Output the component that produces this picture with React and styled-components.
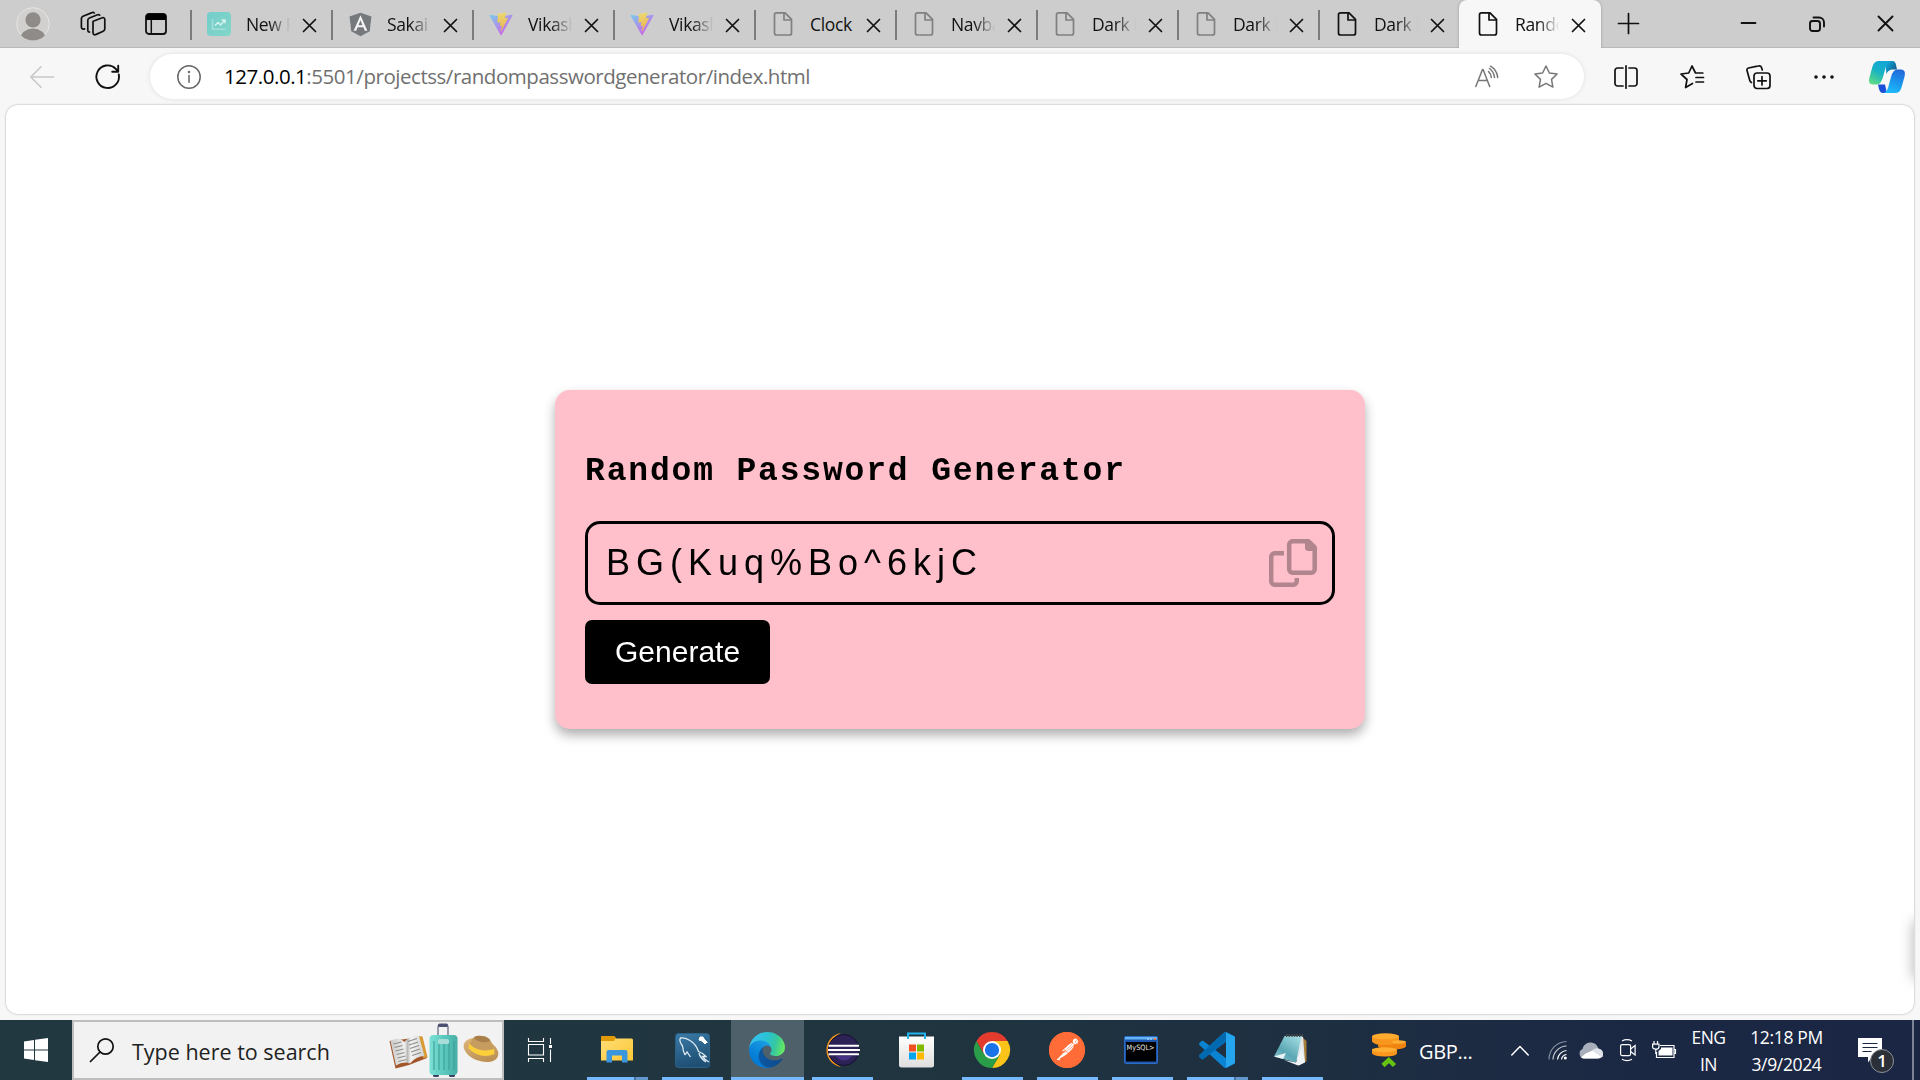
import React from "react";
import styled, { createGlobalStyle, css } from "styled-components";
import { FaAngular } from "react-icons/fa";
import { SiPostman } from "react-icons/si";

const GlobalStyle = createGlobalStyle`
  * { box-sizing: border-box; }
  html, body { margin: 0; padding: 0; }
  body {
    width: 1920px;
    height: 1080px;
    overflow: hidden;
    font-family: "Open Sans", "Noto Sans", sans-serif;
  }
  svg { display: block; flex: none; overflow: visible; }
`;

const Screen = styled.div`
  display: flex;
  flex-direction: column;
  width: 1920px;
  height: 1080px;
  background: #f7f7f7;
`;

/* ---------- tab strip ---------- */

const TabStrip = styled.div`
  display: flex;
  height: 48px;
  background: #cdcdcd;
  box-shadow: inset 0 -1px 0 #b9b9b9;
`;

const IconCell = styled.div`
  display: flex;
  flex: none;
  align-items: center;
  justify-content: center;
  width: ${(p) => p.$w}px;
  height: 100%;
  padding-left: ${(p) => p.$left || 0}px;
  padding-right: ${(p) => p.$right || 0}px;
  padding-bottom: ${(p) => p.$bottom || 0}px;
`;

const TabItem = styled.div`
  display: flex;
  flex: none;
  align-items: center;
  width: 141px;
  height: 48px;
  padding-left: 17px;
  background: linear-gradient(#7b7b7b, #7b7b7b) 0 10px / 2px 30px no-repeat;

  ${(p) =>
    p.$active &&
    css`
      width: 142px;
      height: 48px;
      padding-left: 17px;
      background: #f7f7f7;
      border-radius: 8px 8px 0 0;
      box-shadow: 0 0 3px rgba(0, 0, 0, 0.25);
      clip-path: inset(0 -4px 0 -4px);
    `}
`;

const Favicon = styled.div`
  display: flex;
  flex: none;
  width: 24px;
  height: 24px;
  align-items: center;
  justify-content: center;
  opacity: ${(p) => (p.$dim ? 0.6 : 1)};
`;

const AngularBadge = styled.div`
  display: flex;
  color: #75787c;
  background: radial-gradient(#f4f4f4 50%, transparent 54%);
`;

const TabTitle = styled.div`
  flex: none;
  width: 46px;
  margin-left: 15px;
  padding-bottom: 1px;
  overflow: hidden;
  white-space: nowrap;
  font-size: 17.5px;
  line-height: 24px;
  letter-spacing: -0.35px;
  color: #111;
  ${(p) =>
    p.$fade &&
    css`
      mask-image: linear-gradient(90deg, #000 50%, transparent 96%);
    `}
`;

const TabClose = styled.div`
  display: flex;
  margin-left: 11px;
  padding-top: 2px;
`;

const StripSpacer = styled.div`
  flex: 1;
`;

/* ---------- toolbar ---------- */

const Toolbar = styled.div`
  display: flex;
  align-items: center;
  height: 57px;
  flex: none;
  background: #f7f7f7;
`;

const AddressBar = styled.div`
  display: flex;
  align-items: center;
  flex: none;
  width: 1434px;
  height: 45px;
  margin-left: 9px;
  padding-left: 27px;
  padding-right: 8px;
  background: #fff;
  border-radius: 23px;
  box-shadow: 0 0 5px rgba(0, 0, 0, 0.1);
`;

const Url = styled.div`
  flex: 1;
  margin-left: 23px;
  padding-bottom: 2px;
  font-size: 20.5px;
  line-height: 30px;
  letter-spacing: -0.46px;
  white-space: nowrap;
  color: #707070;
`;

const UrlHost = styled.span`
  color: #000;
`;

/* ---------- page ---------- */

const Viewport = styled.main`
  position: relative;
  display: flex;
  justify-content: center;
  align-items: flex-start;
  flex: none;
  width: 1908px;
  height: 909px;
  margin: 0 6px 6px;
  padding-top: 285px;
  overflow: hidden;
  background: #fff;
  border-radius: 12px;
`;

const Frame = styled.div`
  border-radius: 12px;
  height: 915px;
  flex: none;
  filter: drop-shadow(0 0 1px rgba(0, 0, 0, 0.3));
`;

const SidebarHint = styled.div`
  position: absolute;
  left: 1908px;
  top: 817px;
  width: 12px;
  height: 56px;
  box-shadow: 0 0 14px 1px rgba(0, 0, 0, 0.28);
`;

const Card = styled.section`
  width: 810px;
  height: 339px;
  padding: 57px 30px 0;
  background: #ffc0cb;
  border-radius: 15px;
  box-shadow: 0 6px 12px rgba(0, 0, 0, 0.32);
`;

const Heading = styled.h2`
  margin: 0 0 25px;
  height: 49px;
  font: bold 33px/49px "Courier New", "Liberation Mono", monospace;
  letter-spacing: 1.83px;
  white-space: nowrap;
  color: #000;
`;

const PasswordBox = styled.div`
  display: flex;
  align-items: center;
  justify-content: space-between;
  height: 84px;
  padding: 0 15px 0 18px;
  border: 3px solid #000;
  border-radius: 15px;
`;

const Password = styled.span`
  font: 36px/42px "Liberation Sans", Arial, sans-serif;
  letter-spacing: 6px;
  color: #000;
`;

const CopyIcon = styled.svg`
  width: 48px;
  height: 48px;
  opacity: 0.3;
`;

const GenerateButton = styled.button`
  display: block;
  height: 64px;
  margin: 15px 0 0;
  padding: 0 30px;
  border: 0;
  border-radius: 7px;
  background: #000;
  color: #fff;
  font: 30px/34px "Liberation Sans", Arial, sans-serif;
`;

/* ---------- taskbar ---------- */

const Taskbar = styled.footer`
  display: flex;
  flex: none;
  height: 60px;
  background: linear-gradient(90deg, #213841 0%, #20353f 45%, #1e2f41 68%, #1b2844 85%, #1a2643 100%);
  color: #fff;
`;

const SearchBox = styled.div`
  display: flex;
  align-items: center;
  flex: none;
  width: 432px;
  height: 60px;
  padding-left: 16px;
  border: 2px solid #bebebe;
  background: #f2f2f2;
`;

const SearchText = styled.div`
  flex: none;
  width: 257px;
  margin-left: 18px;
  padding-top: 4px;
  font-size: 21.5px;
  line-height: 30px;
  letter-spacing: 0;
  white-space: nowrap;
  color: #222;
`;

const SearchArtBox = styled.div`
  display: flex;
  flex: none;
  padding-top: 2px;
`;

const AppButton = styled.div`
  display: flex;
  flex: none;
  flex-direction: column;
  align-items: center;
  width: 75px;
  height: 60px;
`;

const AppFace = styled.div`
  display: flex;
  align-items: center;
  justify-content: center;
  width: 73px;
  height: 57px;
  padding-top: 3px;
  padding-right: ${(p) => p.$nudge || 1}px;
  background: ${(p) => (p.$current ? "#4e616a" : "transparent")};
`;

const RunningBar = styled.div`
  width: ${(p) => (p.$current ? 73 : 61)}px;
  height: 3px;
  background: ${(p) =>
    p.$stacked
      ? "linear-gradient(90deg, #76b9ff 47px, #46729b 47px, #46729b 49px, #6398cc 49px)"
      : "#76b9ff"};
`;

const PostmanDisc = styled.div`
  display: flex;
  border-radius: 50%;
  background: radial-gradient(#fff 60%, #ff6c37 64%);
  color: #ff6c37;
`;

const News = styled.div`
  display: flex;
  align-items: center;
  flex: none;
  width: 181px;
  padding-left: 42px;
`;

const NewsText = styled.div`
  margin-left: 13px;
  padding-top: 4px;
  font-size: 20px;
  line-height: 28px;
  letter-spacing: -0.3px;
`;

const Tray = styled.div`
  display: flex;
  align-items: center;
  flex: none;
  width: 169px;
`;

const TrayIcon = styled.div`
  display: flex;
  flex: none;
  margin-left: ${(p) => p.$gap}px;
`;

const Stack = styled.div`
  display: flex;
  flex-direction: column;
  flex: none;
  width: ${(p) => p.$w}px;
  height: 60px;
  padding-top: 4px;
  text-align: center;
  font-size: 17.5px;
  line-height: 27px;
  letter-spacing: ${(p) => p.$track}px;
  white-space: nowrap;
`;

const Notice = styled.div`
  position: relative;
  display: flex;
  width: 36px;
  margin-left: 22px;
  padding-top: 18px;
`;

const NoticeCount = styled.div`
  position: absolute;
  left: 12px;
  top: 29px;
  width: 24px;
  height: 24px;
  border: 1px solid #8d9096;
  border-radius: 50%;
  background: #2b2f38;
  text-align: center;
  font-size: 17px;
  font-weight: 600;
  line-height: 22px;
`;

const ShowDesktop = styled.div`
  width: 8px;
  height: 60px;
  margin-left: auto;
  border-left: 2px solid #7b8394;
`;

/* ---------- drawings ---------- */

const Line = ({ w = 24, h = 24, vb, sw = 1.6, color = "#111", children }) => (
  <svg
    width={w}
    height={h}
    viewBox={vb || `0 0 ${w} ${h}`}
    fill="none"
    stroke={color}
    strokeWidth={sw}
    strokeLinecap="round"
    strokeLinejoin="round"
  >
    {children}
  </svg>
);

const DocIcon = ({ color }) => (
  <Line color={color} sw={1.7}>
    <path d="M6 .8h8l6.500 6.500V21a2 2 0 0 1-2 2H5.500a2 2 0 0 1-2-2V2.800a2 2 0 0 1 2-2z" />
    <path d="M13 1V8H20" />
  </Line>
);

const Cross = ({ size = 12, sw = 1.7 }) => (
  <Line w={size} h={size} sw={sw}>
    <path d={`M0.5 0.5 L${size - 0.5} ${size - 0.5} M${size - 0.5} 0.5 L0.5 ${size - 0.5}`} />
  </Line>
);

const ChartIcon = () => (
  <svg width="24" height="24" viewBox="0 0 24 24">
    <defs>
      <linearGradient id="chart" x1="0" x2="1" y2="1">
        <stop offset="0" stopColor="#74cdcb" />
        <stop offset="1" stopColor="#82d6c9" />
      </linearGradient>
    </defs>
    <rect width="24" height="24" rx="4" fill="url(#chart)" />
    <path d="M5.500 7v10.200h13" fill="none" stroke="#a4dfd9" strokeWidth="1.500" />
    <path d="M8 13.500l3-3 2.500 2.500 4-4.500M14.500 8h3.500v3.300" fill="none" stroke="#d6f2ee" strokeWidth="1.500" />
  </svg>
);

const ViteIcon = () => (
  <svg width="24" height="24" viewBox="0 0 410 404">
    <defs>
      <linearGradient id="va" x1="6" y1="33" x2="235" y2="344" gradientUnits="userSpaceOnUse">
        <stop stopColor="#41d1ff" />
        <stop offset="1" stopColor="#bd34fe" />
      </linearGradient>
      <linearGradient id="vb" x1="194" y1="9" x2="236" y2="292" gradientUnits="userSpaceOnUse">
        <stop stopColor="#ffea83" />
        <stop offset="0.08" stopColor="#ffdd35" />
        <stop offset="1" stopColor="#ffa800" />
      </linearGradient>
    </defs>
    <path
      fill="url(#va)"
      d="M399.641 59.5246L215.643 388.545C211.844 395.338 202.084 395.378 198.228 388.618L10.5817 59.5563C6.38087 52.1896 12.6802 43.2665 21.0281 44.7586L205.223 77.6824C206.398 77.8924 207.601 77.8904 208.776 77.6763L389.119 44.8058C397.439 43.2894 403.768 52.1434 399.641 59.5246Z"
    />
    <path
      fill="url(#vb)"
      d="M292.965 1.5744L156.801 28.2552C154.563 28.6937 152.906 30.5903 152.771 32.8664L144.395 174.33C144.198 177.662 147.258 180.248 150.51 179.498L188.42 170.749C191.967 169.931 195.172 173.055 194.443 176.622L183.18 231.775C182.422 235.487 185.907 238.661 189.532 237.56L212.947 230.446C216.577 229.344 220.065 232.527 219.297 236.242L201.398 322.875C200.278 328.294 207.486 331.249 210.492 326.603L212.5 323.5L323.454 102.072C325.312 98.3645 322.108 94.137 318.036 94.9228L279.014 102.454C275.347 103.161 272.227 99.746 273.262 96.1583L298.731 7.86689C299.767 4.27314 296.636 0.855181 292.965 1.5744Z"
    />
  </svg>
);

const ProfileIcon = () => (
  <svg width="34" height="34" viewBox="0 0 34 34">
    <defs>
      <clipPath id="face">
        <circle cx="17" cy="17" r="16.5" />
      </clipPath>
    </defs>
    <circle cx="17" cy="17" r="16.3" fill="#d2d0ce" stroke="#e6e5e3" />
    <circle cx="17" cy="12.8" r="7.6" fill="#8e8b88" />
    <ellipse cx="17" cy="31.5" rx="12.5" ry="10" fill="#8e8b88" clipPath="url(#face)" />
  </svg>
);

const WorkspacesIcon = () => (
  <Line w={26} h={26} sw={1.7}>
    <path d="M13.2 10.2l9-3.4a1.8 1.8 0 0 1 2.6 1.7v9.3a2.6 2.6 0 0 1-1.6 2.4l-7.6 3.4a1.8 1.8 0 0 1-2.6-1.7V11.4a1.6 1.6 0 0 1 .2-1.2z" />
    <path d="M9.5 21.2a2 2 0 0 1-1.7-2V9.3A2.6 2.6 0 0 1 9.4 7l8.2-3.2a2 2 0 0 1 2.1.3" />
    <path d="M4.6 17.8A2 2 0 0 1 1.4 16.3V7.6A2.6 2.6 0 0 1 3 5.2L12 1.6a2 2 0 0 1 2.3.4" />
  </Line>
);

const VerticalTabsIcon = () => (
  <svg width="22" height="22" viewBox="0 0 22 22">
    <rect x="1" y="1" width="20" height="20" rx="3" fill="none" stroke="#111" strokeWidth="1.8" />
    <path d="M1 7V3.5A2.5 2.5 0 0 1 3.5 1h15A2.5 2.5 0 0 1 21 3.5V7z" fill="#000" />
    <path d="M6.3 7v14" stroke="#111" strokeWidth="1.5" />
  </svg>
);

const CopilotIcon = () => (
  <svg width="36" height="32" viewBox="0 0 36 32">
    <defs>
      <linearGradient id="cp1" x1="0.7" y1="0" x2="0.2" y2="1">
        <stop offset="0" stopColor="#12a5d8" />
        <stop offset="0.45" stopColor="#16b2c4" />
        <stop offset="1" stopColor="#5fdc84" />
      </linearGradient>
      <linearGradient id="cp2" x1="0.7" y1="0" x2="0.4" y2="1">
        <stop offset="0" stopColor="#2368d8" />
        <stop offset="0.6" stopColor="#1a9cf0" />
        <stop offset="1" stopColor="#20b9f8" />
      </linearGradient>
      <linearGradient id="cp3" x1="0" x2="1" y2="0.6">
        <stop offset="0" stopColor="#0fb9e8" />
        <stop offset="1" stopColor="#125a8c" />
      </linearGradient>
    </defs>
    <path d="M16 0H23.5Q26 0 26.800 3L28 8.500H24Q19 8.500 17.500 13z" fill="url(#cp3)" />
    <path d="M9 23.500H16L17 28Q17 31.500 20 32H14Q11 32 10 28z" fill="#1c4fd8" />
    <path d="M10 0H21Q18 1.500 17 5L14 16Q12 23.500 8 23.500H3.500Q-1 23.500 .3 17L3.500 5.500Q5 0 10 0z" fill="url(#cp1)" />
    <path d="M26 32H15Q18 30.500 19 27L22 16Q24 8.500 28 8.500H32Q37 8.500 35.700 15L32.500 26.500Q31 32 26 32z" fill="url(#cp2)" />
  </svg>
);

const WindowsLogo = () => (
  <svg width="24" height="24" viewBox="0 0 24 24" fill="#fff">
    <path d="M0 3.4L10 2v9.5H0zM11 1.8L24 0v11.5H11zM0 12.5h10V22L0 20.6zM11 12.5h13V24L11 22.2z" />
  </svg>
);

const SearchArt = () => (
  <svg width="110" height="56" viewBox="0 0 110 56">
    <defs>
      <linearGradient id="case" x1="0" x2="1">
        <stop offset="0" stopColor="#7ce0d6" />
        <stop offset="0.5" stopColor="#5ccabf" />
        <stop offset="1" stopColor="#47aea6" />
      </linearGradient>
      <linearGradient id="hat" x1="0" x2="1" y2="1">
        <stop offset="0" stopColor="#e3bd86" />
        <stop offset="1" stopColor="#b38648" />
      </linearGradient>
      <linearGradient id="page" x1="0" x2="1">
        <stop offset="0" stopColor="#c9c9c7" />
        <stop offset="0.42" stopColor="#efefee" />
        <stop offset="0.5" stopColor="#b9b9b7" />
        <stop offset="0.6" stopColor="#f4f4f3" />
        <stop offset="1" stopColor="#cfcfcc" />
      </linearGradient>
    </defs>
    <path d="M.5 18L6.500 45.500 20 42 38 35 33 14z" fill="#a3552b" />
    <path d="M29 13l4.500 .5L38.500 34l-4 1.500z" fill="#d99a34" />
    <path d="M1.500 18Q10 13 15.500 19Q22 11 30 13L35.500 33Q27 33 21 40.500Q14 38 7 42.500z" fill="url(#page)" />
    <path d="M4.500 21l8-2M5.500 24.500l8-2M6.500 28l8-2M7.500 31.500l8-2M8.500 35l8-2M9.500 38.500l8-2M19 18.500l9-3M20 22l9-3M21 25.500l9-3M22 29l9-3M23 32.500l9-3" stroke="#8d8d8d" strokeWidth="1.100" />
    <path d="M49 15V4.500Q49 2 51.500 2h5Q59 2 59 4.500V15" fill="none" stroke="#9a9cab" strokeWidth="2" />
    <rect x="49" y="0.500" width="10" height="3.400" rx="1.500" fill="#4e5072" />
    <rect x="44" y="50" width="6" height="4" rx="1.500" fill="#3c4464" />
    <rect x="60" y="50" width="6" height="4" rx="1.500" fill="#3c4464" />
    <rect x="40.500" y="12" width="28" height="40" rx="4" fill="url(#case)" />
    <path d="M45 18v29M50 20v27M55 20v27M60 20v27M65 18v29" stroke="#3e9f97" strokeWidth="1.100" />
    <rect x="49" y="16" width="11" height="5" rx="1.500" fill="#a7dcd8" />
    <ellipse cx="92" cy="27" rx="18" ry="11" transform="rotate(20 92 27)" fill="url(#hat)" />
    <path d="M80 25Q82 11 92 13Q104 13 105 30Q94 37 80 25z" fill="#c79c60" />
    <path d="M80 20.500Q90 30.500 105 26L105.500 31Q92 37 79.500 25.500z" fill="#fbcf3a" />
    <ellipse cx="93" cy="16" rx="8" ry="3" fill="#a97f4a" transform="rotate(10 93 16)" />
  </svg>
);

const TaskViewIcon = () => (
  <svg width="24" height="24" viewBox="0 0 24 24" fill="none" stroke="#fff" strokeWidth="1.1">
    <path d="M.5 0v3.500h15V0M.5 24v-3.500h15V24M.5 6.500h15v10.500h-15zM22.500 0v6M22.500 11.500V24" />
    <rect x="21" y="7" width="3" height="3" fill="#fff" stroke="none" />
  </svg>
);

const FolderIcon = () => (
  <svg width="32" height="28" viewBox="0 0 32 28">
    <defs>
      <linearGradient id="fold" x1="0" x2="1" y2="1">
        <stop offset="0" stopColor="#ffdf7c" />
        <stop offset="1" stopColor="#fcc733" />
      </linearGradient>
    </defs>
    <path d="M0 1.500Q0 0 1.500 0H13l2 2.500H30.500Q32 2.500 32 4V24.500H0z" fill="url(#fold)" />
    <path d="M0 5V1.500Q0 0 1.500 0H13l2 2-2 3z" fill="#e09b07" />
    <path d="M5.500 26.500V16Q5.500 14 7.500 14h17Q26.500 14 26.500 16V26.500H21V19.500H11V26.500z" fill="#3a96dd" />
  </svg>
);

const WorkbenchIcon = () => (
  <svg width="35" height="35" viewBox="0 0 35 35">
    <defs>
      <linearGradient id="wb" y2="1" x2="0.3">
        <stop offset="0" stopColor="#3b7ba8" />
        <stop offset="1" stopColor="#1f4f73" />
      </linearGradient>
    </defs>
    <rect x=".5" y=".5" width="34" height="34" rx="3" fill="url(#wb)" stroke="#2c628a" />
    <path
      d="M10 22Q8 18 7.500 13Q3.500 7.500 5.500 5Q10 4 15 7.500Q21 11 23.500 18.500Q28 20 31 23.500L27.500 23.500Q30 27 34 29M10 22l2-3 3.500 5M24 20Q25 25 31 29"
      fill="none"
      stroke="#dbe9f2"
      strokeWidth="1.3"
    />
    <path d="M25 4l3 0 1 2 3 3-2 2-3-3-3-1zM31 8l1.500 2" fill="#fff" stroke="#fff" />
  </svg>
);

const EdgeIcon = () => (
  <svg width="36" height="36" viewBox="0 0 256 256">
    <defs>
      <linearGradient id="e1" x1="60" y1="177" x2="240" y2="177" gradientUnits="userSpaceOnUse">
        <stop stopColor="#0c59a4" />
        <stop offset="1" stopColor="#114a8b" />
      </linearGradient>
      <linearGradient id="e2" x1="150" y1="90" x2="40" y2="230" gradientUnits="userSpaceOnUse">
        <stop stopColor="#1b9de2" />
        <stop offset="0.2" stopColor="#1595df" />
        <stop offset="0.7" stopColor="#0680d7" />
        <stop offset="1" stopColor="#0078d4" />
      </linearGradient>
      <linearGradient id="e3" x1="10" y1="60" x2="250" y2="120" gradientUnits="userSpaceOnUse">
        <stop stopColor="#35c1f1" />
        <stop offset="0.45" stopColor="#2bc3d2" />
        <stop offset="0.72" stopColor="#36c7a0" />
        <stop offset="1" stopColor="#66eb5e" />
      </linearGradient>
    </defs>
    <path
      fill="url(#e1)"
      d="M231 190.500c-3.400 1.800-6.900 3.400-10.500 4.700a101.500 101.500 0 0 1-35.900 6.400c-47.300 0-88.500-32.500-88.500-74.300a31.500 31.500 0 0 1 16.400-27.300c-42.800 1.800-53.800 46.400-53.800 72.500 0 74 68.100 81.400 82.800 81.400 7.900 0 19.800-2.300 27-4.600l1.300-.4a128.300 128.300 0 0 0 66.600-52.800 4 4 0 0 0-5.400-5.600Z"
    />
    <path
      fill="url(#e2)"
      d="M105.700 241.400a79.200 79.200 0 0 1-22.700-21.300 80.700 80.700 0 0 1 29.500-120c3.200-1.500 8.500-4.100 15.600-4a32.400 32.400 0 0 1 25.700 13 31.900 31.900 0 0 1 6.300 18.700c0-.2 24.500-79.600-80-79.600-43.900 0-80 41.700-80 78.200a130.200 130.200 0 0 0 12.100 56 128 128 0 0 0 156.400 67 75.500 75.500 0 0 1-62.800-8Z"
    />
    <path
      fill="url(#e3)"
      d="M152.300 148.900c-.9 1-3.400 2.500-3.400 5.600 0 2.600 1.700 5.200 4.800 7.300 14.300 10 41.400 8.600 41.500 8.600a59.600 59.600 0 0 0 30.300-8.300 61.400 61.400 0 0 0 30.400-52.900c.3-22.400-8-37.300-11.300-43.900C223.500 23.900 177.700 0 128 0A128 128 0 0 0 0 126.200c.5-36.500 36.800-66 80-66 3.500 0 23.500.3 42 10a72.600 72.600 0 0 1 30.900 29.300c6.100 10.600 7.200 24.100 7.200 29.500 0 5.400-2.700 13.300-7.800 19.900Z"
    />
  </svg>
);

const EclipseIcon = () => (
  <svg width="36" height="34" viewBox="0 0 36 34">
    <path d="M17 0A17.200 17.200 0 0 0 17 34Q5 28 5 17T17 0z" fill="#f7941e" />
    <circle cx="19.700" cy="17" r="15.500" fill="#2c2255" stroke="#15102e" strokeWidth="1" />
    <path d="M12 23h16Q25 27.500 20 27.500T12 23z" fill="#453285" />
    <path d="M4.500 12.700h30.500M4 17h32M4.500 21.300h30.500" stroke="#fff" strokeWidth="2" />
  </svg>
);

const StoreIcon = () => (
  <svg width="35" height="36" viewBox="0 0 35 36">
    <defs>
      <linearGradient id="bag" y2="1" x2="0">
        <stop offset="0" stopColor="#fff" />
        <stop offset="1" stopColor="#dedede" />
      </linearGradient>
    </defs>
    <path d="M0 4.500h35V33q0 2.500-2.500 2.500h-30Q0 35.500 0 33z" fill="url(#bag)" />
    <path d="M9 7V1.500h17V7" fill="none" stroke="#23b4f0" strokeWidth="2" />
    <path d="M10 12.500h7v7h-7z" fill="#f25022" />
    <path d="M18 12.500h7v7h-7z" fill="#7fba00" />
    <path d="M10 20.500h7v7h-7z" fill="#00a4ef" />
    <path d="M18 20.500h7v7h-7z" fill="#ffb900" />
  </svg>
);

const ChromeIcon = () => (
  <svg width="36" height="36" viewBox="0 0 48 48">
    <path d="M3.215 12A24 24 0 0 1 44.785 12H24L13.600 30z" fill="#e33b2e" />
    <path d="M44.785 12A24 24 0 0 1 24 48L34.400 30 24 12z" fill="#fcc419" />
    <path d="M24 48A24 24 0 0 1 3.215 12L13.600 30H34.400z" fill="#2a9d48" />
    <circle cx="24" cy="24" r="12" fill="#fff" />
    <circle cx="24" cy="24" r="9.500" fill="#1a73e8" />
  </svg>
);

const ConsoleIcon = () => (
  <svg width="34" height="28" viewBox="0 0 34 28">
    <rect x=".5" y=".5" width="33" height="27" rx="1" fill="#1d55ad" stroke="#2c6cc4" />
    <rect x="1" y="1" width="32" height="2.500" fill="#62b4f5" />
    <path d="M23 3h2M26 3h2" stroke="#9fd0f8" strokeWidth="1.500" />
    <path d="M30 3h2" stroke="#f07a45" strokeWidth="1.800" />
    <rect x="2" y="6" width="30" height="19.500" fill="#000" />
    <text x="2.600" y="14" fill="#e8e8e8" fontSize="7.300" textLength="28" lengthAdjust="spacingAndGlyphs" fontFamily="DejaVu Sans, sans-serif">
      MySQL&gt;
    </text>
  </svg>
);

const CodeIcon = () => (
  <svg width="36" height="36" viewBox="0 0 24 24">
    <path
      fill="#0a84d2"
      d="M23.150 2.587L18.210.21a1.494 1.494 0 0 0-1.705.29l-9.460 8.630-4.120-3.128a.999.999 0 0 0-1.276.057L.327 7.261A1 1 0 0 0 .326 8.740L3.899 12 .326 15.260a1 1 0 0 0 .001 1.479L1.650 17.940a.999.999 0 0 0 1.276.057l4.120-3.128 9.460 8.630a1.492 1.492 0 0 0 1.704.29l4.942-2.377A1.500 1.500 0 0 0 24 20.060V3.939a1.500 1.500 0 0 0-.85-1.352zm-5.146 14.861L10.826 12l7.178-5.448v10.896z"
    />
    <path d="M.327 15.260L7.045 9.130l3.781 2.870L2.926 17.997a1 1 0 0 1-1.276-.057L.327 16.739a1 1 0 0 1 0-1.479z" fill="#0069b0" />
    <path d="M16.505.5L7.045 9.130 10.826 12l7.178-5.448V.15z" fill="#0069b0" />
    <path d="M18.004.15L23.150 2.587A1.500 1.500 0 0 1 24 3.939V20.060a1.500 1.500 0 0 1-.85 1.352L18.210 23.790h-.2z" fill="#25a5ee" />
  </svg>
);

const NotepadIcon = () => (
  <svg width="34" height="32" viewBox="0 0 34 32">
    <defs>
      <linearGradient id="np" x1="0.8" x2="0.1" y2="1">
        <stop offset="0" stopColor="#9fdbe0" />
        <stop offset="0.6" stopColor="#5aa6b4" />
        <stop offset="1" stopColor="#8fc6cc" />
      </linearGradient>
    </defs>
    <path d="M29 4l3.500 3V28l-4-2z" fill="#a97f3a" />
    <path d="M11 2h18l2 26-6 3.500z" fill="#dfe7e8" />
    <path d="M10.500 2H27.500L22 28.500 0 22.500z" fill="url(#np)" />
    <path d="M0 22.500L12 19 9 25z" fill="#e8f4f5" />
    <path d="M10 26L24 31.500 31 28.500 28 14 22 28.500z" fill="#f0f4f4" />
    <path d="M12 1.500h17" stroke="#4a4a4a" strokeWidth="3" strokeDasharray="1.300 1.300" />
  </svg>
);

const CoinsIcon = () => (
  <svg width="34" height="35" viewBox="0 0 34 35">
    <g fill="#f8961d">
      <path d="M0 16.500v4q2 3 13 3t12-3v-4z" />
      <path d="M6 9.500v4q2 3 14 3t14-3v-4z" fill="#f0830f" />
      <path d="M0 3.500v5q2 3.500 13 3.500t14-3.500v-5z" />
    </g>
    <ellipse cx="12.500" cy="16.800" rx="12.500" ry="2.500" fill="#ffad33" />
    <ellipse cx="27" cy="9" rx="7" ry="1.800" fill="#ffad33" />
    <ellipse cx="13.500" cy="3.300" rx="13.500" ry="3" fill="#ffab2e" />
    <path d="M11 32.500L16.800 27l5.700 5.500" fill="none" stroke="#66c411" strokeWidth="4.500" />
  </svg>
);

const WifiIcon = () => (
  <svg width="19" height="20" viewBox="0 0 19 20" fill="none" strokeWidth="1.200">
    <path d="M1 19.500A18 18 0 0 1 18.500 1.500" stroke="#8790a0" />
    <path d="M5 19.500A14 14 0 0 1 18.500 6" stroke="#c8ccd3" />
    <path d="M9.500 19.500A10 10 0 0 1 18.500 10.500" stroke="#fff" />
    <path d="M13.500 19.500A6 6 0 0 1 18.500 14.500" stroke="#fff" />
    <circle cx="17.300" cy="18" r="1.500" fill="#fff" />
  </svg>
);

const CloudIcon = () => (
  <svg width="24" height="17" viewBox="0 0 24 17">
    <path d="M5 16.500A5 5 0 0 1 3.500 7Q5 1 11 .5T19.500 6.500Q24 7.500 24 12T19 16.500z" fill="#a9afba" />
    <path d="M2 15.500Q6 11 13.500 8.500L22.500 14.500Q21 16.500 19 16.500H5Q3 16.500 2 15.500z" fill="#fff" />
    <path d="M13 8.500Q17 5 20.500 7Q24 8 24 12T22.800 15z" fill="#dfe2e7" />
  </svg>
);

const MeetIcon = () => (
  <svg width="16" height="22" viewBox="0 0 16 22" fill="none" stroke="#fff" strokeWidth="1.200">
    <rect x=".6" y="5.600" width="10" height="11" rx="1.500" />
    <path d="M10.600 10l4.500-3.500v9.500l-4.500-3.500M2 2Q7 -.8 12 2M2 20.200Q7 23 12 20.200" />
  </svg>
);

const BatteryIcon = () => (
  <svg width="24" height="18" viewBox="0 0 24 18" fill="none" stroke="#fff" strokeWidth="1.200">
    <path d="M8 4.500h14v12H4.500V11M22.500 8.500h1v4h-1" />
    <path d="M9 6.500h11.500v8H6.500v-4.500L9 8z" fill="#fff" stroke="none" />
    <path d="M2 0v3M5.500 0v3M.6 3.200h6.400v2.500q0 2.500-3.200 2.500t-3.200-2.500zM3.800 8v5" />
  </svg>
);

const NoticeIcon = () => (
  <svg width="24" height="26" viewBox="0 0 24 26">
    <path d="M0 0h24v19H14l-4 5.500V19H0z" fill="#fff" />
    <path d="M4.500 5.500h15M4.500 9.500h15M4.500 13.500h9" stroke="#1b2844" strokeWidth="1.200" />
  </svg>
);

/* ---------- data ---------- */

const tabs = [
  { title: "New P", icon: <ChartIcon />, fade: true },
  {
    title: "Sakai",
    fade: true,
    icon: (
      <AngularBadge>
        <FaAngular size={27} />
      </AngularBadge>
    ),
  },
  { title: "Vikash", icon: <ViteIcon />, dim: true, fade: true },
  { title: "Vikash", icon: <ViteIcon />, dim: true, fade: true },
  { title: "Clock", icon: <DocIcon color="#808080" /> },
  { title: "Navbar", icon: <DocIcon color="#808080" />, fade: true },
  { title: "Dark M", icon: <DocIcon color="#808080" />, fade: true },
  { title: "Dark M", icon: <DocIcon color="#808080" />, fade: true },
  { title: "Dark M", icon: <DocIcon color="#111" />, fade: true },
  { title: "Random", icon: <DocIcon color="#111" />, fade: true, active: true },
];

const apps = [
  { icon: <FolderIcon />, running: true, stacked: true, nudge: 2 },
  { icon: <WorkbenchIcon />, running: true },
  { icon: <EdgeIcon />, running: true, current: true },
  { icon: <EclipseIcon />, running: true, nudge: 2 },
  { icon: <StoreIcon />, nudge: 2 },
  { icon: <ChromeIcon />, running: true, nudge: 2 },
  {
    running: true,
    nudge: 2,
    icon: (
      <PostmanDisc>
        <SiPostman size={36} />
      </PostmanDisc>
    ),
  },
  { icon: <ConsoleIcon />, running: true, nudge: 3 },
  { icon: <CodeIcon />, running: true, stacked: true, nudge: 2 },
  { icon: <NotepadIcon />, running: true, nudge: 3 },
];

export default function App() {
  return (
    <>
      <GlobalStyle />
      <Screen>
        <TabStrip>
          <IconCell $w={66}>
            <ProfileIcon />
          </IconCell>
          <IconCell $w={54}>
            <WorkspacesIcon />
          </IconCell>
          <IconCell $w={70} $left={2}>
            <VerticalTabsIcon />
          </IconCell>
          {tabs.map((t, i) => (
            <TabItem key={i} $active={t.active}>
              <Favicon $dim={t.dim}>{t.icon}</Favicon>
              <TabTitle $fade={t.fade}>{t.title}</TabTitle>
              <TabClose>
                <Cross size={13} />
              </TabClose>
            </TabItem>
          ))}
          <IconCell $w={54} $bottom={2}>
            <Line w={21} h={21} sw={1.700}>
              <path d="M10.500 .5v20M.5 10.500h20" />
            </Line>
          </IconCell>
          <StripSpacer />
          <IconCell $w={68} $bottom={2}>
            <Line w={15} h={2} sw={1.800}>
              <path d="M.5 1h14" />
            </Line>
          </IconCell>
          <IconCell $w={69} $bottom={1}>
            <Line w={16} h={16} sw={1.900}>
              <rect x="1" y="5" width="10" height="10" rx="2.500" />
              <path d="M4.500 1.500H10a5 5 0 0 1 5 5V10.500" />
            </Line>
          </IconCell>
          <IconCell $w={69} $bottom={1}>
            <Cross size={15} sw={1.900} />
          </IconCell>
        </TabStrip>

        <Toolbar>
          <IconCell $w={84}>
            <Line w={24} h={22} color="#c9c9c9" sw={1.600}>
              <path d="M23.500 11H.8M11 .8L.8 11 11 21.200" />
            </Line>
          </IconCell>
          <IconCell $w={48}>
            <Line sw={1.900}>
              <path d="M22.800 9.500A11.300 11.300 0 1 1 19.800 3.800L22 6.500M22.200 .8V6.800H16.200" />
            </Line>
          </IconCell>
          <IconCell $w={9} />
          <AddressBar>
            <Line color="#666" sw={1.500}>
              <circle cx="12" cy="12" r="11.200" />
              <path d="M12 10.500v6.800" />
              <circle cx="12" cy="7" r=".5" fill="#666" />
            </Line>
            <Url>
              <UrlHost>127.0.0.1</UrlHost>:5501/projectss/randompasswordgenerator/index.html
            </Url>
            <IconCell $w={60} $left={1}>
              <Line w={23} h={22} color="#767676" sw={1.500}>
                <path d="M.8 20.500L7.500 3.500h.6L14.700 20.500M3.300 14.500h9M13.500 5.500Q16 8 16.300 11.500M14.500 2.500Q19 6 19.500 11.500M15.500 .2Q22 4 22.700 11.500" />
              </Line>
            </IconCell>
            <IconCell $w={60}>
              <Line color="#767676" sw={1.500}>
                <path d="M12 1l3.400 7 7.700 1-5.600 5.400 1.400 7.700L12 18.400l-6.900 3.700 1.400-7.700L.9 9l7.700-1z" />
              </Line>
            </IconCell>
          </AddressBar>
          <IconCell $w={8} />
          <IconCell $w={67}>
            <Line sw={1.700}>
              <path d="M9 21H3.500A2.500 2.500 0 0 1 1 18.500v-13A2.500 2.500 0 0 1 3.500 3H9M15 3h5.500A2.500 2.500 0 0 1 23 5.500v13a2.500 2.500 0 0 1-2.500 2.500H15M12 .8v22.400" />
            </Line>
          </IconCell>
          <IconCell $w={66}>
            <Line sw={1.700}>
              <path d="M12.500 18.500L5.600 22.500 7 14.500 1 9l7.700-1L12 1l3.500 7h7.300M16 12.500h7.500M16 17h7.500" />
            </Line>
          </IconCell>
          <IconCell $w={66}>
            <Line w={25} sw={1.700}>
              <rect x="8" y="8" width="16" height="15.500" rx="3" />
              <path d="M16 11.500v8.500M11.800 15.800h8.500M5.500 17.500A3 3 0 0 1 3.800 15.500L1 5.500A2 2 0 0 1 2.500 3L12.500 .9A2.500 2.500 0 0 1 15.500 2.500L16.300 5" />
            </Line>
          </IconCell>
          <IconCell $w={66}>
            <svg width="20" height="4" viewBox="0 0 20 4" fill="#111">
              <circle cx="2" cy="2" r="1.800" />
              <circle cx="10" cy="2" r="1.800" />
              <circle cx="18" cy="2" r="1.800" />
            </svg>
          </IconCell>
          <IconCell $w={60}>
            <CopilotIcon />
          </IconCell>
        </Toolbar>

        <Frame>
          <Viewport>
            <Card>
              <Heading>Random Password Generator</Heading>
              <PasswordBox>
                <Password>BG(Kuq%Bo^6kjC</Password>
                <CopyIcon viewBox="0 0 512 512">
                  <path d="M502.600 70.630l-61.250-61.250C435.400 3.371 427.200 0 418.700 0H255.100c-35.350 0-64 28.660-64 64l.0195 256C192 355.400 220.700 384 256 384h192c35.200 0 64-28.800 64-64V93.250C512 84.770 508.600 76.630 502.600 70.630zM464 320c0 8.836-7.164 16-16 16H255.100c-8.838 0-16-7.164-16-16L239.100 64.130c0-8.836 7.164-16 16-16h128L384 96c0 17.670 14.330 32 32 32h47.100V320zM272 448c0 8.836-7.164 16-16 16H63.100c-8.838 0-16-7.164-16-16L47.980 192.100c0-8.836 7.164-16 16-16H160V128H63.990c-35.350 0-64 28.650-64 64l.0098 256C.002 483.300 28.660 512 64 512h192c35.200 0 64-28.800 64-64v-32h-47.100L272 448z" />
                </CopyIcon>
              </PasswordBox>
              <GenerateButton>Generate</GenerateButton>
            </Card>
            <SidebarHint />
          </Viewport>
        </Frame>

        <Taskbar>
          <IconCell $w={72}>
            <WindowsLogo />
          </IconCell>
          <SearchBox>
            <Line sw={1.700}>
              <circle cx="15.500" cy="8.500" r="7.700" />
              <path d="M10 14L.5 23.500" />
            </Line>
            <SearchText>Type here to search</SearchText>
            <SearchArtBox>
              <SearchArt />
            </SearchArtBox>
          </SearchBox>
          <IconCell $w={76} $right={4}>
            <TaskViewIcon />
          </IconCell>
          {apps.map((a, i) => (
            <AppButton key={i}>
              <AppFace $current={a.current} $nudge={a.nudge}>
                {a.icon}
              </AppFace>
              {a.running && <RunningBar $current={a.current} $stacked={a.stacked} />}
            </AppButton>
          ))}
          <News>
            <CoinsIcon />
            <NewsText>GBP...</NewsText>
          </News>
          <Tray>
            <TrayIcon $gap={0}>
              <Line w={18} h={11} color="#fff" sw={1.500}>
                <path d="M.8 10L9 1.500l8.200 8.500" />
              </Line>
            </TrayIcon>
            <TrayIcon $gap={19}>
              <WifiIcon />
            </TrayIcon>
            <TrayIcon $gap={12}>
              <CloudIcon />
            </TrayIcon>
            <TrayIcon $gap={17}>
              <MeetIcon />
            </TrayIcon>
            <TrayIcon $gap={16}>
              <BatteryIcon />
            </TrayIcon>
          </Tray>
          <Stack $w={57} $track={-0.6}>
            <span>ENG</span>
            <span>IN</span>
          </Stack>
          <Stack $w={99} $track={-0.35}>
            <span>12:18 PM</span>
            <span>3/9/2024</span>
          </Stack>
          <Notice>
            <NoticeIcon />
            <NoticeCount>1</NoticeCount>
          </Notice>
          <ShowDesktop />
        </Taskbar>
      </Screen>
    </>
  );
}
